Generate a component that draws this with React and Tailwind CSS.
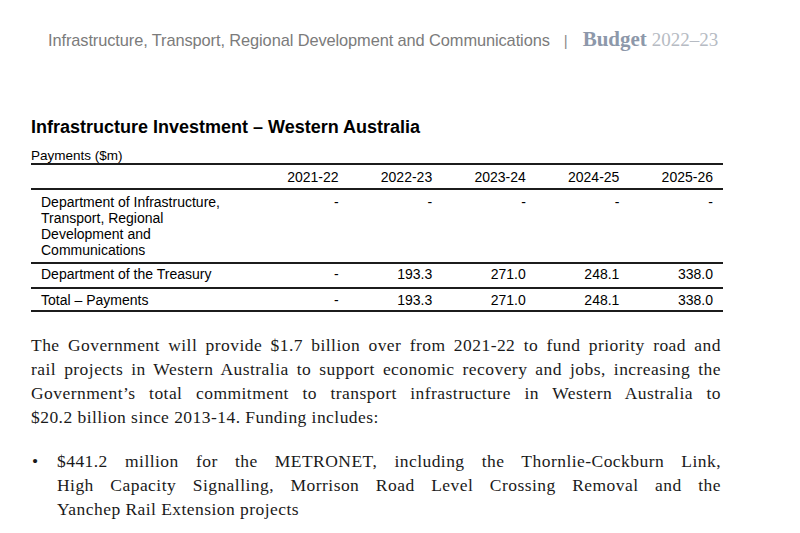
import React from 'react';

const years = ['2021-22', '2022-23', '2023-24', '2024-25', '2025-26'];

const rows = [
  {
    label: ['Department of Infrastructure,', 'Transport, Regional', 'Development and', 'Communications'],
    values: ['-', '-', '-', '-', '-'],
    pad: 'pt-[4px] pb-[4px]',
  },
  {
    label: ['Department of the Treasury'],
    values: ['-', '193.3', '271.0', '248.1', '338.0'],
    pad: 'pt-[2px] pb-[5px]',
  },
  {
    label: ['Total \u2013 Payments'],
    values: ['-', '193.3', '271.0', '248.1', '338.0'],
    pad: 'pt-[3px] pb-[2px]',
  },
];

const paragraph = [
  'The Government will provide $1.7 billion over from 2021-22 to fund priority road and',
  'rail projects in Western Australia to support economic recovery and jobs, increasing the',
  'Government\u2019s total commitment to transport infrastructure in Western Australia to',
  '$20.2 billion since 2013-14. Funding includes:',
];

const bullet = [
  '$441.2 million for the METRONET, including the Thornlie-Cockburn Link,',
  'High Capacity Signalling, Morrison Road Level Crossing Removal and the',
  'Yanchep Rail Extension projects',
];

// each line is justified on its own so breaks match the printed page
const Lines = ({ lines }) => (
  <>
    {lines.map((line, i) => (
      <div
        key={i}
        className={`whitespace-nowrap ${i < lines.length - 1 ? 'text-justify [text-align-last:justify]' : 'text-left'}`}
      >
        {line}
      </div>
    ))}
  </>
);

export default function App() {
  return (
    <div className="w-[800px] h-[533px] bg-white overflow-hidden">
      {/* Running header */}
      <header className="pt-[24px] pl-[48px] flex items-baseline whitespace-nowrap">
        <span className="font-['Liberation_Sans',sans-serif] text-[16.4px] leading-[22px] text-[#7b7b7b] tracking-[-0.1px]">
          Infrastructure, Transport, Regional Development and Communications
        </span>
        <span className="font-['Liberation_Sans',sans-serif] text-[15px] text-[#8a8a8a] ml-[14px]">|</span>
        <span className="font-['Liberation_Serif',serif] font-bold text-[21px] text-[#8d98aa] ml-[15px]">Budget</span>
        <span className="font-['Liberation_Serif',serif] text-[19px] text-[#b6bbc3] ml-[5px]">2022&ndash;23</span>
      </header>

      <main className="px-[31px] font-['Liberation_Sans',Arial,sans-serif] text-black">
        <h1 className="mt-[60px] text-[18px] leading-[22px] font-bold">
          Infrastructure Investment &ndash; Western Australia
        </h1>
        <div className="mt-[11px] text-[13.5px] leading-[14px]">Payments ($m)</div>

        {/* Table */}
        <div className="w-[692px] text-[14px] leading-[16px] border-t-2 border-[#1c1c1c]">
          <div className="grid grid-cols-[224px_repeat(5,1fr)] border-b-2 border-[#1c1c1c] pt-[4px] pb-[3px]">
            <div />
            {years.map((y) => (
              <div key={y} className="text-right pr-[10px]">{y}</div>
            ))}
          </div>
          {rows.map((row, i) => (
            <div
              key={i}
              className={`grid grid-cols-[224px_repeat(5,1fr)] border-b-2 border-[#1c1c1c] ${row.pad}`}
            >
              <div className="pl-[10px]">
                {row.label.map((l) => (
                  <div key={l}>{l}</div>
                ))}
              </div>
              {row.values.map((v, j) => (
                <div key={j} className="text-right pr-[10px]">{v}</div>
              ))}
            </div>
          ))}
        </div>

        {/* Body text */}
        <div className="font-['Liberation_Serif','Times_New_Roman',serif] text-[17.5px] leading-[24px] tracking-[0.45px] text-[#1a1a1a]">
          <div className="mt-[21px] w-[690px]">
            <Lines lines={paragraph} />
          </div>
          <div className="mt-[20px] flex w-[690px]">
            <div className="w-[26px] pl-[1px]">&bull;</div>
            <div className="flex-1">
              <Lines lines={bullet} />
            </div>
          </div>
        </div>
      </main>
    </div>
  );
}
